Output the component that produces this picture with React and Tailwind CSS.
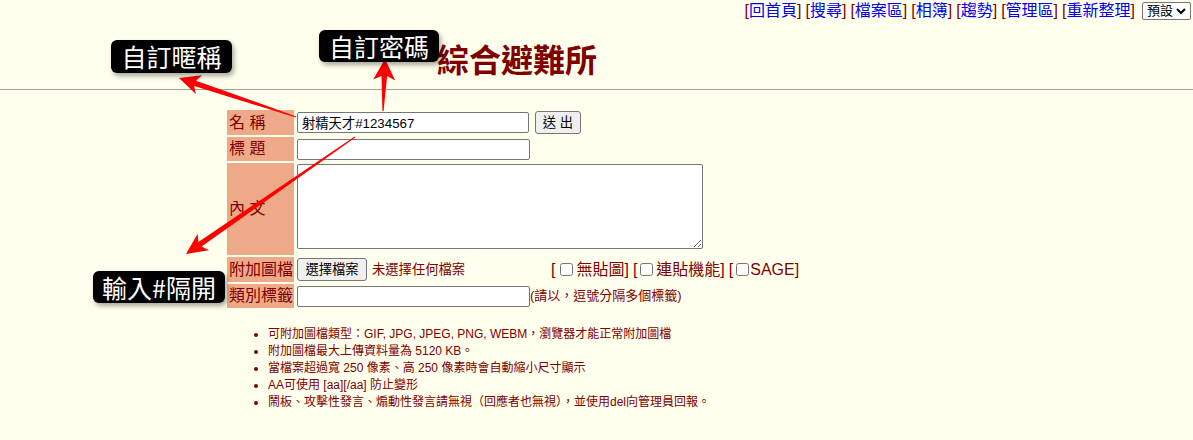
const maroon = 'text-[#800000]';

function arrowPoints(tail, tip, headLen = 21, headHalf = 10, neckHalf = 2.8, tailHalf = 0.6, notch = 4) {
  const [tx, ty] = tail;
  const [px, py] = tip;
  const dx = px - tx;
  const dy = py - ty;
  const len = Math.hypot(dx, dy);
  const ux = dx / len;
  const uy = dy / len;
  const nx = -uy;
  const ny = ux;
  const bx = px - ux * headLen;
  const by = py - uy * headLen;
  const kx = px - ux * (headLen - notch);
  const ky = py - uy * (headLen - notch);
  const pts = [
    [tx + nx * tailHalf, ty + ny * tailHalf],
    [kx + nx * neckHalf, ky + ny * neckHalf],
    [bx + nx * headHalf, by + ny * headHalf],
    [px, py],
    [bx - nx * headHalf, by - ny * headHalf],
    [kx - nx * neckHalf, ky - ny * neckHalf],
    [tx - nx * tailHalf, ty - ny * tailHalf],
  ];
  return pts.map((p) => p.map((v) => v.toFixed(1)).join(',')).join(' ');
}

function NavLink({ children }) {
  return (
    <span className={maroon}>
      [<a href="#" className="text-[#0000ee]">{children}</a>]
    </span>
  );
}

function Label({ children }) {
  return (
    <div className="w-[67px] shrink-0 bg-[#eeaa88] flex items-center pl-[2px] text-[16px] text-[#800000] whitespace-pre">
      {children}
    </div>
  );
}

function Note({ className, children }) {
  return (
    <div
      className={`absolute flex items-center justify-center bg-black text-white rounded-[6px] shadow-[2px_3px_5px_rgba(0,0,0,0.35)] text-[25px] leading-none font-['Noto_Sans_CJK_TC',sans-serif] ${className}`}
    >
      {children}
    </div>
  );
}

export default function App() {
  const links = ['回首頁', '搜尋', '檔案區', '相簿', '趨勢', '管理區', '重新整理'];
  return (
    <div className="relative w-full min-h-[440px] overflow-hidden bg-[#ffffee] font-['Liberation_Sans','Noto_Sans_CJK_TC',sans-serif] text-black">
      {/* top navigation */}
      <div className="flex justify-end items-center h-[22px] pr-[2px] text-[16px] leading-[20px]">
        <div className="flex gap-[4px]">
          {links.map((l) => (
            <NavLink key={l}>{l}</NavLink>
          ))}
        </div>
        <div className="ml-[7px] flex items-center gap-[3px] h-[18px] px-[4px] border border-[#767676] rounded-[2px] bg-white text-[13px]">
          預設
          <svg width="10" height="8" viewBox="0 0 10 8">
            <path d="M1 2 L5 6 L9 2" fill="none" stroke="black" strokeWidth="2" />
          </svg>
        </div>
      </div>

      {/* title */}
      <h1 className="mt-[19px] ml-[437px] text-[32px] leading-[40px] font-bold text-[#800000]">綜合避難所</h1>
      <div className="mt-[8px] h-px bg-[#a0a0a0]" />

      {/* form */}
      <div className="mt-[20px] ml-[227px] flex flex-col gap-[2px]">
        <div className="flex gap-[2px] h-[25px]">
          <Label>名 稱</Label>
          <div className="pl-[1px] flex items-center gap-[6px]">
            <input
              defaultValue="射精天才#1234567"
              className="w-[232px] h-[21px] px-[4px] border border-[#767676] rounded-[2px] bg-white text-[13.3px]"
            />
            <button className="w-[46px] h-[23px] border border-[#767676] rounded-[3px] bg-[#efefef] text-[13.3px]">
              送 出
            </button>
          </div>
        </div>
        <div className="flex gap-[2px] h-[24px]">
          <Label>標 題</Label>
          <div className="pl-[1px] flex items-center">
            <input className="w-[233px] h-[21px] px-[4px] border border-[#767676] rounded-[2px] bg-white text-[13.3px]" />
          </div>
        </div>
        <div className="flex gap-[2px] h-[92px]">
          <Label>內 文</Label>
          <div className="pl-[1px] pt-[1px]">
            <textarea className="block w-[406px] h-[85px] px-[2px] border border-[#767676] rounded-[2px] bg-white text-[13.3px]" />
          </div>
        </div>
        <div className="flex gap-[2px] h-[25px]">
          <Label>附加圖檔</Label>
          <div className="pl-[1px] flex items-center">
            <div className="w-[254px] flex items-center">
              <span className="inline-flex items-center justify-center w-[70px] h-[23px] border border-[#767676] rounded-[3px] bg-[#efefef] text-[13.3px]">
                選擇檔案
              </span>
              <span className={`ml-[5px] text-[13.3px] ${maroon}`}>未選擇任何檔案</span>
            </div>
            <div className={`flex items-center gap-[4px] text-[16px] ${maroon}`}>
              <label className="flex items-center">
                [<input type="checkbox" className="w-[13px] h-[13px] ml-[5px] mr-[3px]" />無貼圖]
              </label>
              <label className="flex items-center">
                [<input type="checkbox" className="w-[13px] h-[13px] ml-[3px] mr-[3px]" />連貼機能]
              </label>
              <label className="flex items-center">
                [<input type="checkbox" className="w-[13px] h-[13px] ml-[3px] mr-[1px]" />SAGE]
              </label>
            </div>
          </div>
        </div>
        <div className="flex gap-[2px] h-[24px]">
          <Label>類別標籤</Label>
          <div className="pl-[1px] flex items-center">
            <input className="w-[233px] h-[21px] px-[4px] border border-[#767676] rounded-[2px] bg-white text-[13.3px]" />
            <span className={`text-[13px] ${maroon}`}>(請以，逗號分隔多個標籤)</span>
          </div>
        </div>
      </div>

      {/* notes */}
      <ul className={`mt-[18px] ml-[268px] list-disc text-[12px] leading-[17px] ${maroon}`}>
        <li>可附加圖檔類型：GIF, JPG, JPEG, PNG, WEBM，瀏覽器才能正常附加圖檔</li>
        <li>附加圖檔最大上傳資料量為 5120 KB。</li>
        <li>當檔案超過寬 250 像素、高 250 像素時會自動縮小尺寸顯示</li>
        <li>AA可使用 [aa][/aa] 防止變形</li>
        <li>鬧板、攻擊性發言、煽動性發言請無視（回應者也無視），並使用del向管理員回報。</li>
      </ul>
      <div className="h-[20px]" />

      {/* annotations */}
      <svg className="absolute inset-0 pointer-events-none" width="1193" height="440">
        <polygon points={arrowPoints([296, 117], [179, 78])} fill="#ff0000" />
        <polygon points={arrowPoints([383, 111], [385, 59], 21, 11)} fill="#ff0000" />
        <polygon points={arrowPoints([355, 137], [186, 254])} fill="#ff0000" />
      </svg>
      <Note className="left-[111px] top-[40px] w-[121px] h-[33px]">自訂暱稱</Note>
      <Note className="left-[319px] top-[30px] w-[120px] h-[32px]">自訂密碼</Note>
      <Note className="left-[93px] top-[271px] w-[132px] h-[32px]">輸入#隔開</Note>
    </div>
  );
}
